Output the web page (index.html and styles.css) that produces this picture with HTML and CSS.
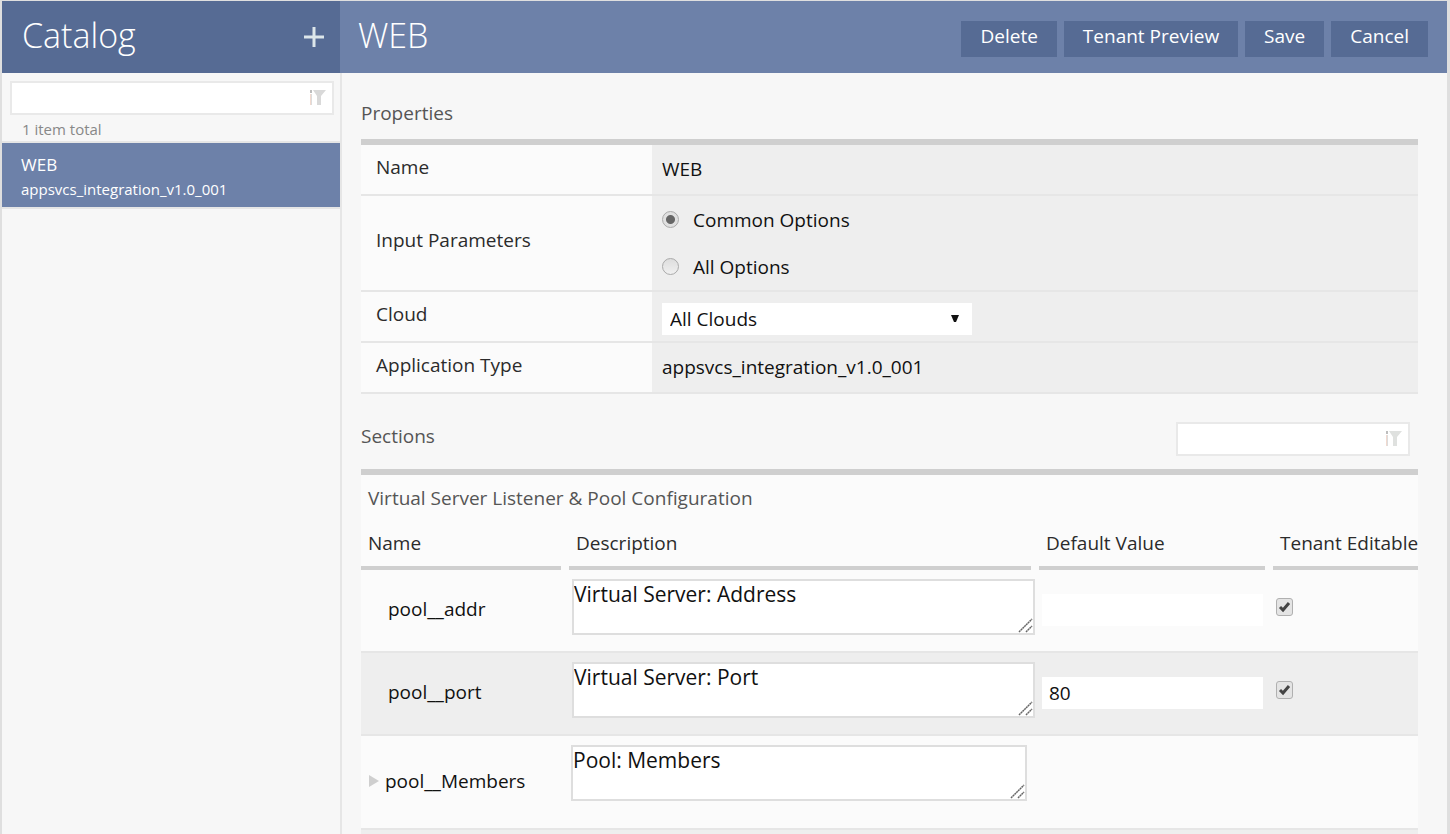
FILE: index.html
```html
<!DOCTYPE html>
<html lang="en">
<head>
<meta charset="utf-8">
<title>Catalog</title>
<link rel="stylesheet" href="styles.css">
</head>
<body>
<div class="app">
  <aside class="sidebar">
    <header class="side-head">
      <h1 class="title">Catalog</h1>
      <button class="add" type="button" aria-label="Add">
        <svg width="20" height="20" viewBox="0 0 20 20"><path d="M10 0V20M0 10H20" stroke="#dce6ea" stroke-width="3" fill="none"/></svg>
      </button>
    </header>
    <div class="side-filter">
      <label class="filter">
        <input type="text" aria-label="Filter catalog">
        <svg class="funnel" width="16" height="16" viewBox="0 0 16 16"><path d="M0 0H2V3H0Z" fill="#bdbdbd"/><path d="M0 4H1V15H0Z" fill="#f1d9cf"/><path d="M1 4H2V15H1Z" fill="#dcdcdc"/><path d="M3 0H16L11 6V15H7V6Z" fill="#d9d9d9"/></svg>
      </label>
      <p class="count">1 item total</p>
    </div>
    <a class="entry" href="#web"><span class="entry-name">WEB</span><span class="entry-type">appsvcs_integration_v1.0_001</span></a>
  </aside>
  <main class="main">
    <header class="main-head">
      <h2 class="title">WEB</h2>
      <div class="actions">
        <button type="button">Delete</button>
        <button type="button">Tenant Preview</button>
        <button type="button">Save</button>
        <button type="button">Cancel</button>
      </div>
    </header>
    <div class="content">
      <h3 class="heading">Properties</h3>
      <table class="props">
        <tr><th scope="row">Name</th><td>WEB</td></tr>
        <tr>
          <th scope="row">Input Parameters</th>
          <td class="radios">
            <label><input type="radio" name="params" checked>Common Options</label>
            <label><input type="radio" name="params">All Options</label>
          </td>
        </tr>
        <tr>
          <th scope="row"><label for="cloud">Cloud</label></th>
          <td class="cloud-cell"><select id="cloud"><option>All Clouds</option></select></td>
        </tr>
        <tr><th scope="row">Application Type</th><td>appsvcs_integration_v1.0_001</td></tr>
      </table>
      <div class="section-bar">
        <h3 class="heading">Sections</h3>
        <label class="filter">
          <input type="text" aria-label="Filter sections">
          <svg class="funnel" width="16" height="16" viewBox="0 0 16 16"><path d="M0 0H2V3H0Z" fill="#bdbdbd"/><path d="M0 4H1V15H0Z" fill="#f1d9cf"/><path d="M1 4H2V15H1Z" fill="#dcdcdc"/><path d="M3 0H16L11 6V15H7V6Z" fill="#dfe1df"/></svg>
        </label>
      </div>
      <section class="section">
        <h4 class="section-title">Virtual Server Listener &amp; Pool Configuration</h4>
        <table class="grid">
          <colgroup><col class="c-name"><col><col class="c-value"><col class="c-edit"></colgroup>
          <thead>
            <tr><th><div>Name</div></th><th><div>Description</div></th><th><div>Default Value</div></th><th><div>Tenant Editable</div></th></tr>
          </thead>
          <tbody>
            <tr>
              <td class="name">pool__addr</td>
              <td><textarea aria-label="Description of pool__addr">Virtual Server: Address</textarea></td>
              <td><input class="value" type="text" aria-label="Default value of pool__addr"></td>
              <td><input class="tick" type="checkbox" aria-label="pool__addr tenant editable" checked></td>
            </tr>
            <tr class="alt">
              <td class="name">pool__port</td>
              <td><textarea aria-label="Description of pool__port">Virtual Server: Port</textarea></td>
              <td><input class="value" type="text" value="80" aria-label="Default value of pool__port"></td>
              <td><input class="tick" type="checkbox" aria-label="pool__port tenant editable" checked></td>
            </tr>
            <tr class="group">
              <td class="name"><svg width="10" height="12" viewBox="0 0 10 12"><path d="M0 0L10 6L0 12Z" fill="#cfcfcf"/></svg>pool__Members</td>
              <td><textarea aria-label="Description of pool__Members">Pool: Members</textarea></td>
              <td></td>
              <td></td>
            </tr>
            <tr class="alt next"><td colspan="4"></td></tr>
          </tbody>
        </table>
      </section>
    </div>
  </main>
</div>
</body>
</html>
```

FILE: styles.css
```css
* { box-sizing: border-box; }
body {
  margin: 0;
  background: #f7f7f7;
  color: #111;
  font: 19px/24px "Open Sans", "Noto Sans", sans-serif;
}
h1, h2, h3, h4, p { margin: 0; font-weight: 400; }
button, input, select, textarea { font: inherit; color: inherit; margin: 0; }

.app {
  display: flex;
  height: 100vh;
  overflow: hidden;
  border: solid #dfdfdf;
  border-width: 1px 3px 0 2px;
}
.sidebar { flex: 0 0 340px; border-right: 2px solid #e6e6e6; }
.main { flex: 1; min-width: 0; }
.side-head, .main-head {
  display: flex;
  align-items: center;
  justify-content: space-between;
  height: 72px;
  padding: 0 16px 0 20px;
  color: #fff;
}
.side-head { background: #566b94; }
.main-head { margin-left: -2px; background: #6d81a9; padding: 0 19px 0 18px; }
.title { font-size: 34px; line-height: 48px; font-weight: 300; padding-bottom: 5px; }
.add { display: flex; padding: 0; border: 0; background: none; }
.actions { display: flex; gap: 7px; padding-top: 3px; }
.actions button {
  height: 36px;
  padding: 0 19px 5px;
  border: 0;
  background: #566b94;
  color: #fff;
}

.filter { position: relative; display: block; }
.filter input {
  display: block;
  width: 100%;
  height: 34px;
  padding: 0 32px 0 8px;
  border: 2px solid #e9e9e9;
  background: #fff;
}
.funnel { position: absolute; right: 8px; top: 9px; }
.side-filter { padding: 8px 6px 0 8px; border-bottom: 2px solid #e6e6e6; }
.count { padding: 3px 12px 1px; font-size: 15px; line-height: 22px; color: #888; }
.entry {
  display: block;
  padding: 9px 19px 5px;
  border-bottom: 2px solid #e6e6e6;
  background: #6d81a9;
  color: #fff;
  text-decoration: none;
}
.entry span { display: block; line-height: 25px; }
.entry-name { font-size: 17px; }
.entry-type { font-size: 15px; }

.content { padding: 28px 29px 0 19px; }
.heading { font-size: 19px; line-height: 24px; color: #555; }
.props {
  width: 100%;
  margin-top: 14px;
  border-top: 6px solid #cfcfcf;
  border-collapse: separate;
  border-spacing: 0;
}
.props th, .props td {
  height: 51px;
  padding: 0 10px 2px;
  border-bottom: 2px solid #e6e6e6;
  text-align: left;
  font-weight: 400;
}
.props th { width: 291px; padding: 0 15px 6px; background: #fbfbfb; color: #2b2b2b; }
.props td { background: #eee; }
.props .radios { padding: 0 10px; }
.radios label { display: flex; align-items: center; gap: 14px; height: 47px; }
.radios input {
  appearance: none;
  width: 17px;
  height: 17px;
  border: 1px solid #aaa;
  border-radius: 50%;
  background: linear-gradient(#ddd, #f0f0f0);
}
.radios input:checked { background: radial-gradient(circle, #666 0 4px, #e0e0e0 5px); }
.props .cloud-cell { padding: 4px 10px 0; }
.cloud-cell select {
  appearance: none;
  display: block;
  width: 310px;
  height: 32px;
  padding: 0 8px;
  border: 0;
  border-radius: 0;
  background: #fff url("data:image/svg+xml,%3Csvg xmlns='http://www.w3.org/2000/svg' width='8' height='8'%3E%3Cpath d='M0 0H8L5 7H3Z' fill='%23111'/%3E%3C/svg%3E") no-repeat right 13px top 12px;
}

.section-bar {
  display: flex;
  justify-content: space-between;
  padding: 28px 8px 13px 0;
  border-bottom: 6px solid #cfcfcf;
}
.section-bar .heading { padding-top: 2px; }
.section-bar .filter { width: 234px; }
.section { background: #fbfbfb; }
.section-title { padding: 11px 7px 10px; font-size: 19px; line-height: 24px; color: #555; }
.grid { width: 100%; table-layout: fixed; border-collapse: separate; border-spacing: 0; }
.c-name { width: 208px; }
.c-value { width: 234px; }
.c-edit { width: 145px; }
.grid th { padding: 0 8px 0 0; text-align: left; font-weight: 400; color: #2b2b2b; white-space: nowrap; }
.grid th:last-child { padding-right: 0; }
.grid th div { padding: 11px 7px; border-bottom: 4px solid #cfcfcf; }
.grid td { height: 83px; padding: 0; vertical-align: top; border-bottom: 2px solid #e6e6e6; }
.grid .alt td { background: #eee; }
.grid .name { padding: 27px 0 0 27px; }
.grid textarea {
  display: block;
  width: calc(100% - 7px);
  height: 56px;
  margin: 9px 0 0 3px;
  padding: 1px 0 0 0;
  border: 2px solid #dedede;
  background: #fff;
  font-size: 21px;
  resize: both;
  overflow: hidden;
}
.grid textarea::-webkit-resizer {
  background: url("data:image/svg+xml,%3Csvg xmlns='http://www.w3.org/2000/svg' width='15' height='15'%3E%3Cpath d='M1 14L14 1M8 14L14 8' stroke='%23666' stroke-width='1.5' stroke-dasharray='2 .5' fill='none'/%3E%3C/svg%3E") no-repeat right bottom;
}
.value {
  display: block;
  width: calc(100% - 13px);
  height: 32px;
  margin: 24px 0 0 3px;
  padding: 0 7px;
  border: 0;
  background: #fff;
}
.tick {
  appearance: none;
  display: block;
  width: 17px;
  height: 18px;
  margin: 28px 0 0 3px;
  border: 1px solid #b0b0b0;
  border-radius: 3px;
  background: #e4e4e4;
}
.tick:checked {
  background: #e4e4e4 url("data:image/svg+xml,%3Csvg xmlns='http://www.w3.org/2000/svg' width='13' height='12'%3E%3Cpath d='M2 6L5 9L11 2' stroke='%23444' stroke-width='3' fill='none'/%3E%3C/svg%3E") no-repeat center;
}
.grid .group td { height: 94px; }
.grid .group .name { display: flex; align-items: center; gap: 6px; padding: 0 0 2px 8px; }
.grid .group textarea { width: calc(100% - 14px); margin-left: 2px; }
.grid .next td { height: 83px; }
```
